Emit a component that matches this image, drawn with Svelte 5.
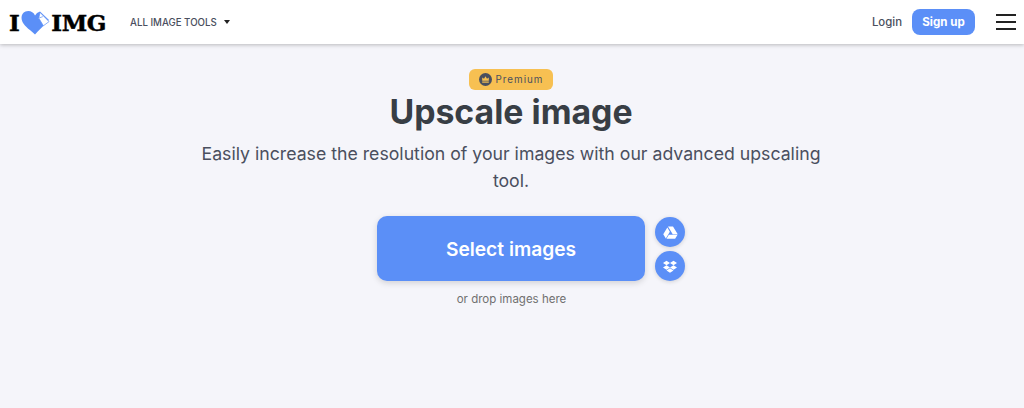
<script>
  const title = 'Upscale image';
</script>

<header class="topbar">
  <div class="nav-left">
    <a class="logo" href="#top" aria-label="iLoveIMG">
      <span>I</span>
      <svg class="heart" width="29" height="25" viewBox="0 0 29 25" aria-hidden="true">
        <path d="M14 5.5C12.5 1.5 8 0 4.5 1.5 0.5 3-0.5 8 1.5 12 4 17 10 20.5 14 24.5 17 20.5 21.5 17.5 24.5 13L28 10 19 1.5 16 3Z" fill="#5b8ff7"/>
        <path d="M19 2.4L28 11.6 22.4 15.8 17.8 8.2Z" fill="#fff" stroke="#5b8ff7" stroke-width="0.7"/>
        <path d="M18.2 8L21.8 6.6" fill="none" stroke="#5b8ff7" stroke-width="0.7"/>
      </svg>
      <span>IMG</span>
    </a>
    <button class="tools">ALL IMAGE TOOLS <i class="caret"></i></button>
  </div>
  <div class="nav-right">
    <a class="login" href="#top">Login</a>
    <a class="signup" href="#top">Sign up</a>
    <button class="burger" aria-label="Menu"><i></i><i></i><i></i></button>
  </div>
</header>

<main class="hero">
  <span class="badge">
    <svg width="13" height="13" viewBox="0 0 13 13" aria-hidden="true">
      <circle cx="6.5" cy="6.5" r="6.5" fill="#4a4f5e"/>
      <path d="M3.2 4.6L5 5.8 6.5 3.2 8 5.8 9.8 4.6V7.8H3.2Z" fill="#f7c052"/>
      <rect x="3.2" y="8.5" width="6.6" height="1.2" fill="#f7c052"/>
    </svg>
    Premium
  </span>
  <h1>{title}</h1>
  <p class="lead">Easily increase the resolution of your images with our advanced upscaling tool.</p>
  <div class="actions">
    <button class="select">Select images</button>
    <div class="cloud">
      <button class="round" aria-label="Google Drive">
        <svg width="15" height="13" viewBox="0 0 16 14"><path d="M5.3 0.5H10.7L15.8 9H10.4ZM4.6 1.7L7.3 6.3 3 13.4 0.2 9ZM6.2 9.5H15.6L13 13.6H3.7Z" fill="#fff"/></svg>
      </button>
      <button class="round" aria-label="Dropbox">
        <svg width="14" height="13" viewBox="0 0 16 14"><path d="M4 0.5 8 3 4 5.6 0 3ZM12 0.5 16 3 12 5.6 8 3ZM0 8.2 4 5.6 8 8.2 4 10.7ZM12 5.6 16 8.2 12 10.7 8 8.2ZM4 11.5 8 9 12 11.5 8 14Z" fill="#fff"/></svg>
      </button>
    </div>
  </div>
  <p class="drop">or drop images here</p>
</main>

<style>
  :global(body) {
    background: #f5f5fa;
    font-family: Inter, "Noto Sans", sans-serif;
  }

  button { font-family: inherit; border: 0; cursor: pointer; padding: 0; }
  a { text-decoration: none; }

  .topbar {
    height: 44px;
    background: #fff;
    box-shadow: 0 1px 4px rgba(0,0,0,0.25);
    display: flex;
    align-items: center;
    justify-content: space-between;
    padding: 0 8px 0 9px;
  }

  .nav-left, .nav-right { display: flex; align-items: center; }

  .logo {
    display: flex;
    align-items: center;
    font-family: "DejaVu Serif", serif;
    font-weight: 700;
    font-size: 23px;
    letter-spacing: -0.4px;
    color: #000;
    -webkit-text-stroke: 0.5px #000;
    line-height: 1;
  }
  .heart { margin: 0 1px 0 2px; }

  .tools {
    margin-left: 24px;
    background: none;
    font-size: 9.7px;
    font-weight: 500;
    color: #4a4f5e;
    display: flex;
    align-items: center;
    gap: 7px;
  }
  .caret {
    width: 0; height: 0;
    border-left: 3.5px solid transparent;
    border-right: 3.5px solid transparent;
    border-top: 4px solid #222;
  }

  .login { font-size: 11.4px; font-weight: 500; color: #4a4f5e; margin-right: 10px; }
  .signup {
    width: 63px; height: 26px;
    display: flex; align-items: center; justify-content: center;
    background: #5b8ff7;
    border-radius: 8px;
    color: #fff;
    font-size: 11.6px;
    font-weight: 700;
    margin-right: 21px;
  }
  .burger {
    width: 20px;
    background: none;
    display: flex; flex-direction: column; gap: 5px;
  }
  .burger i { display: block; height: 2px; background: #222; }

  .hero {
    display: flex;
    flex-direction: column;
    align-items: center;
    padding: 25px 2px 0 0;
  }

  .badge {
    width: 84px; height: 21px;
    display: flex; align-items: center; justify-content: center; gap: 4px;
    background: #f7c052;
    border-radius: 6px;
    font-size: 9.8px;
    font-weight: 400;
    letter-spacing: 1px;
    color: #4a4f5e;
  }

  h1 {
    margin: 1px 0 0;
    font-size: 33.8px;
    line-height: 42px;
    font-weight: 700;
    color: #383e45;
  }

  .lead {
    margin: 7px 0 0;
    width: 640px;
    text-align: center;
    font-size: 17.7px;
    line-height: 27px;
    color: #4a4f5e;
  }

  .actions {
    margin: 22px 0 0 40px;
    display: flex;
    align-items: flex-start;
    gap: 10px;
  }

  .select {
    width: 268px; height: 65px;
    background: #5b8ff7;
    border-radius: 10px;
    color: #fff;
    font-size: 19.2px;
    font-weight: 600;
    box-shadow: 0 2px 6px rgba(0,0,0,0.15);
  }

  .cloud { display: flex; flex-direction: column; gap: 4px; padding-top: 1px; }

  .round {
    width: 30px; height: 30px;
    border-radius: 50%;
    background: #5b8ff7;
    display: flex; align-items: center; justify-content: center;
    box-shadow: 0 1px 4px rgba(0,0,0,0.15);
  }

  .drop {
    margin: 11px 0 0 1px;
    font-size: 11.5px;
    line-height: 14px;
    color: #707070;
  }
</style>
